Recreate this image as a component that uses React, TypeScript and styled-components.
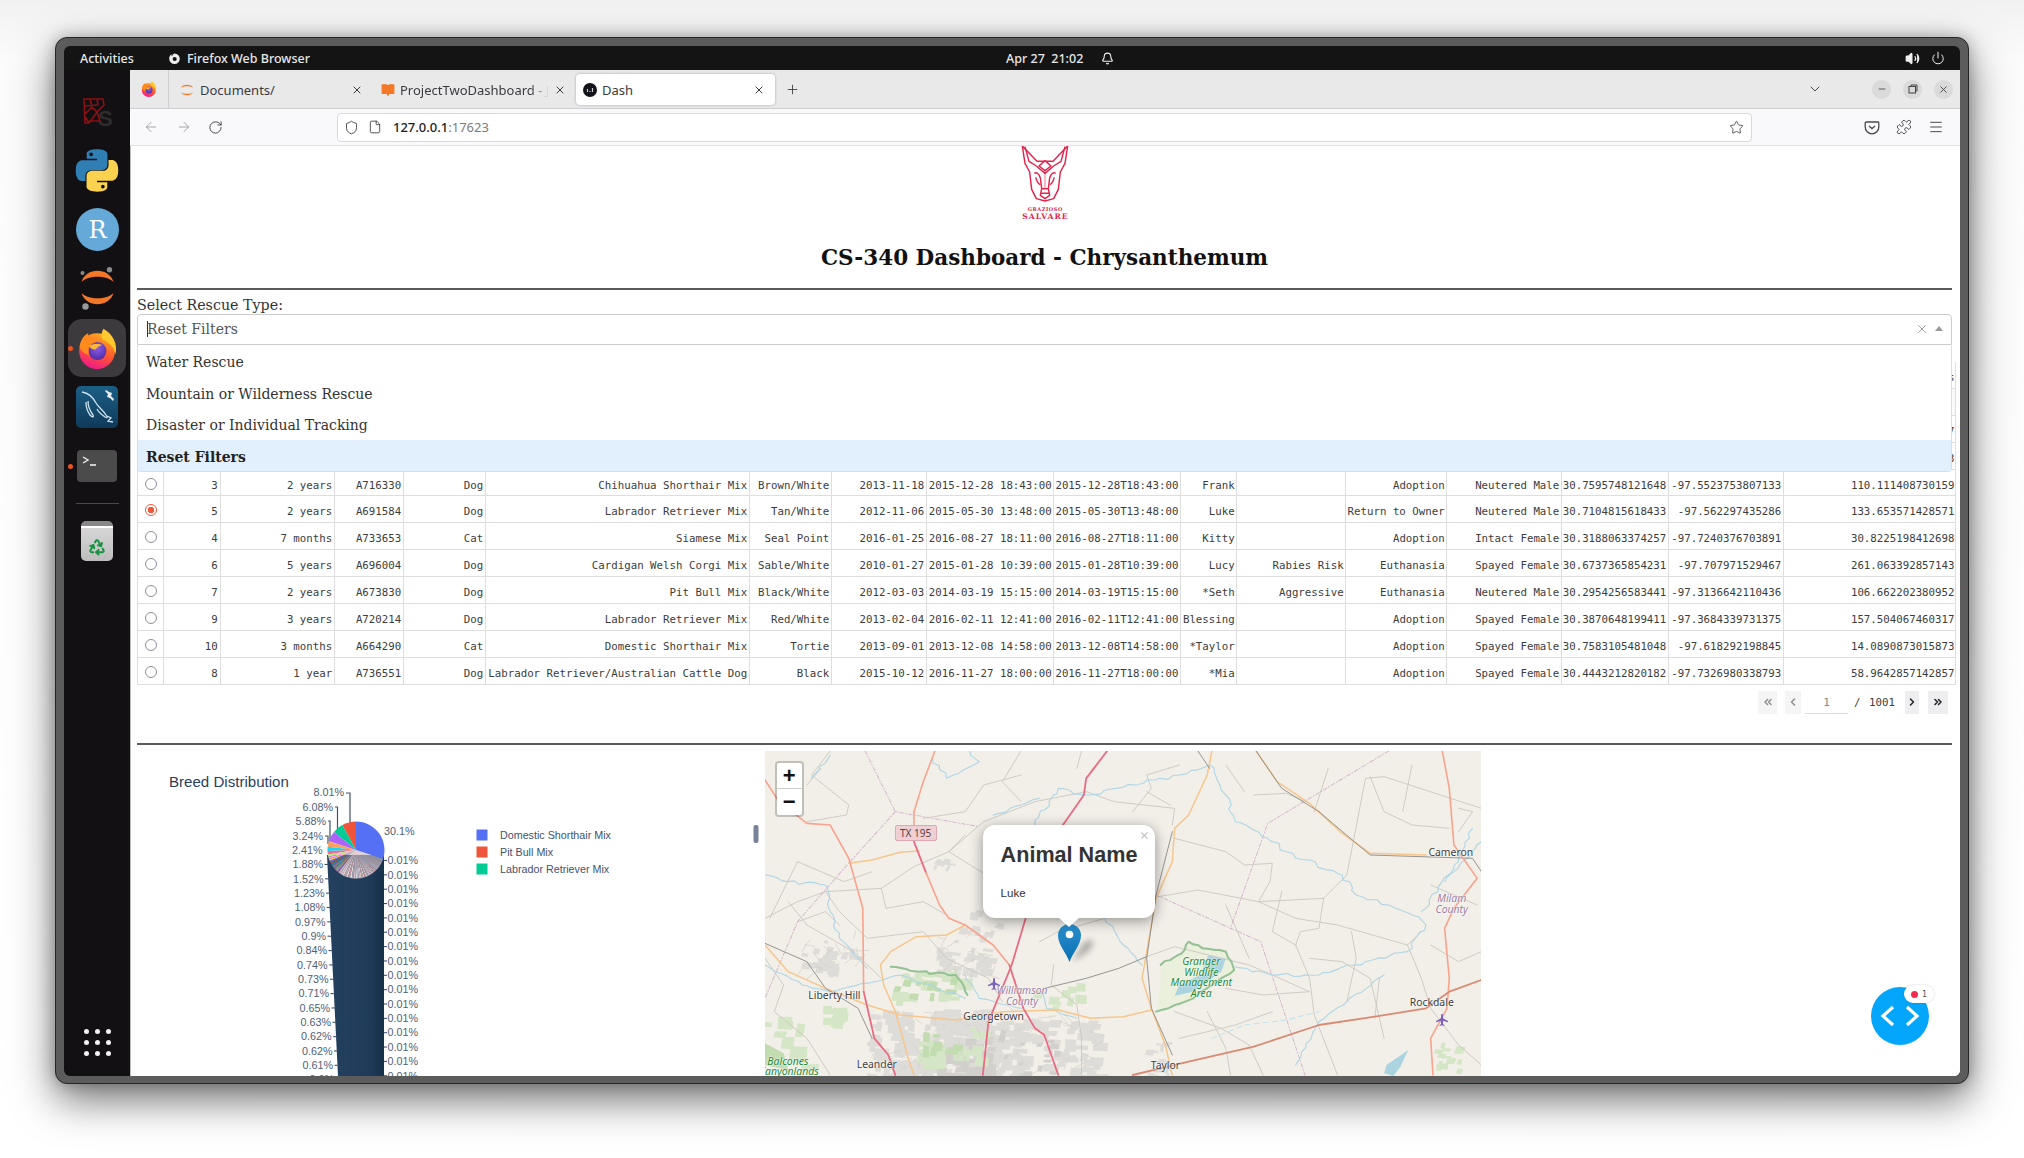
import React from "react";
import styled, { createGlobalStyle } from "styled-components";
import { X, Plus, ChevronDown, Minus, ArrowLeft, ArrowRight, RotateCw, Shield, File, Star, Menu, Puzzle, Volume2, Power, Bell, Recycle, BookOpen, ChevronLeft, ChevronRight, ChevronsLeft, ChevronsRight } from "lucide-react";

const Global = createGlobalStyle`
  html, body { margin: 0; padding: 0; width: 2024px; height: 1158px; overflow: hidden; background: #fff; }
  #root { width: 2024px; height: 1158px; }
  * { box-sizing: border-box; }
`;

const Desk = styled.div`
  padding: 37px 0 0 55px;
  width: 2024px;
  height: 1158px;
  background: linear-gradient(#f1f1f1, #fbfbfb 60px, #fff);
`;
const Frame = styled.div`
  width: 1914px;
  height: 1047px;
  padding: 8px 8px 7px 8px;
  background: #5c5c5c;
  border: 1px solid #262626;
  border-radius: 12px;
  box-shadow: 0 16px 42px rgba(0, 0, 0, 0.55), 0 0 16px rgba(0, 0, 0, 0.25);
  display: flex;
  flex-direction: column;
`;
const Screen = styled.div`
  flex: 1;
  min-height: 0;
  display: flex;
  flex-direction: column;
  border-radius: 6px;
  overflow: hidden;
`;
const TopBar = styled.div`
  height: 24px;
  flex: none;
  background: #141414;
  color: #e8e8e8;
  font: 500 12.5px "Noto Sans", sans-serif;
  display: flex;
  align-items: center;
  padding-left: 16px;
`;
const Activities = styled.span`
  width: 88px;
`;
const AppName = styled.span`
  display: flex;
  align-items: center;
  gap: 6px;
  width: 838px;
`;
const Clock = styled.span`
  width: 95px;
  font-size: 12.5px;
`;
const TrayBell = styled.span`
  display: flex;
  color: #f2f2f2;
  width: 804px;
`;
const Tray = styled.span`
  display: flex;
  gap: 11px;
  color: #f0f0f0;
`;
const Main = styled.div`
  flex: 1;
  min-height: 0;
  display: flex;
`;
const Dock = styled.nav`
  width: 66px;
  flex: none;
  background: #131014;
  display: flex;
  flex-direction: column;
  align-items: center;
`;
const DockItem = styled.div<{ $w: number; $h: number; $mt: number; $tile?: boolean; $run?: boolean }>`
  position: relative;
  width: ${p => p.$w}px;
  height: ${p => p.$h}px;
  margin-top: ${p => p.$mt}px;
  flex: none;
  display: flex;
  align-items: center;
  justify-content: center;
  background: ${p => (p.$tile ? "#3d3a3e" : "transparent")};
  border-radius: ${p => (p.$tile ? "14px" : "0")};
  &::before {
    content: "";
    display: ${p => (p.$run ? "block" : "none")};
    position: absolute;
    left: ${p => (p.$tile ? "0" : "-9px")};
    top: 50%;
    width: 5px;
    height: 5px;
    margin: -2.5px 0 0 0;
    border-radius: 50%;
    background: #e95420;
  }
`;
const DockSep = styled.div`
  width: 43px;
  height: 1px;
  margin-top: 21px;
  background: #4a4a4a;
  flex: none;
`;
const AppsGrid = styled.div`
  margin-top: auto;
  margin-bottom: 20px;
  width: 27px;
  height: 27px;
  display: grid;
  grid-template-columns: repeat(3, 5px);
  justify-content: space-between;
  align-content: space-between;
`;
const AppsDot = styled.i`
  width: 5px;
  height: 5px;
  border-radius: 50%;
  background: #f2f2f2;
`;
const Browser = styled.div`
  flex: 1;
  min-width: 0;
  display: flex;
  flex-direction: column;
  background: #fff;
`;
const TabBar = styled.div`
  height: 39px;
  flex: none;
  display: flex;
  align-items: stretch;
  background: #e9e9ea;
  border-bottom: 1px solid #cfcfd2;
  font: 13px "Noto Sans", sans-serif;
  color: #3b3b3f;
`;
const FxView = styled.div`
  width: 39px;
  display: flex;
  align-items: center;
  justify-content: center;
  border-right: 1px solid #cfcfd2;
`;
const Tab = styled.div<{ $w: number; $pad: number; $active?: boolean }>`
  width: ${p => p.$w}px;
  padding: 0 10px 0 ${p => p.$pad}px;
  margin: 4px 0 3px;
  display: flex;
  align-items: center;
  gap: 5px;
  border-radius: 4px;
  background: ${p => (p.$active ? "#fff" : "transparent")};
  box-shadow: ${p => (p.$active ? "0 0 3px rgba(0,0,0,.28)" : "none")};
`;
const TabText = styled.span<{ $fade?: boolean }>`
  flex: 1;
  min-width: 0;
  white-space: nowrap;
  overflow: hidden;
  ${p => (p.$fade ? "mask-image: linear-gradient(90deg,#000 88%,transparent);" : "")}
`;
const NewTab = styled.div`
  margin-left: 10px;
  display: flex;
  align-items: center;
`;
const TabEnd = styled.div`
  margin-left: auto;
  display: flex;
  align-items: center;
  gap: 12px;
  padding-right: 7px;
`;
const ListTabs = styled.span`
  display: flex;
  margin-right: 37px;
`;
const WinBtn = styled.span`
  width: 19px;
  height: 19px;
  border-radius: 50%;
  background: #dadada;
  display: flex;
  align-items: center;
  justify-content: center;
  color: #444;
`;
const ToolBar = styled.div`
  height: 37px;
  flex: none;
  background: #f9f9fb;
  border-bottom: 1px solid #e3e3e6;
  display: flex;
  align-items: center;
  color: #4a4a4f;
  padding-left: 13px;
`;
const NavBtn = styled.span<{ $dim?: boolean }>`
  width: 17px;
  margin-right: 15.5px;
  display: flex;
  color: ${p => (p.$dim ? "#a6a6aa" : "#4a4a4f")};
`;
const UrlBar = styled.div`
  margin-left: 96.5px;
  width: 1415px;
  height: 29px;
  background: #fff;
  border: 1px solid #d9d9dc;
  border-radius: 4px;
  display: flex;
  align-items: center;
  padding: 0 7px 0 6px;
  font: 13px "Noto Sans", sans-serif;
`;
const UrlIcon = styled.span<{ $gap: number }>`
  display: flex;
  margin-right: ${p => p.$gap}px;
`;
const UrlHost = styled.span`
  color: #1e1e22;
  font-weight: 500;
`;
const UrlPort = styled.span`
  color: #7b7b80;
  flex: 1;
`;
const ToolIcons = styled.div`
  margin-left: 112px;
  display: flex;
  gap: 16px;
`;
const Page = styled.main`
  flex: 1;
  min-height: 0;
  position: relative;
  overflow: hidden;
  background: #fff;
  border-left: 1px solid #bdbdbd;
  padding: 0 8px 0 6px;
  font-family: "DejaVu Serif", serif;
`;
const LogoRow = styled.div`
  height: 74px;
  display: flex;
  justify-content: center;
`;
const Title = styled.h1`
  margin: 25px 0 0;
  font: bold 21.5px/26px "DejaVu Serif", serif;
  color: #111;
  text-align: center;
`;
const Rule = styled.hr<{ $mt: number }>`
  margin: ${p => p.$mt}px 0 0;
  border: 0;
  height: 2px;
  background: #5a5a5a;
`;
const SelectLabel = styled.div`
  margin-top: 6px;
  font-size: 14.25px;
  line-height: 18px;
  color: #333;
`;
const SelectWrap = styled.div`
  position: relative;
  z-index: 3;
`;
const SelectBox = styled.div`
  height: 31px;
  border: 1px solid #ccc;
  border-radius: 4px 4px 0 0;
  background: #fff;
  display: flex;
  align-items: center;
  padding: 0 8px 2px 9px;
  font-size: 14px;
  color: #555;
`;
const Caret = styled.i`
  width: 1px;
  height: 16px;
  background: #333;
  margin-right: -1px;
`;
const SelectText = styled.span`
  flex: 1;
`;
const ClearX = styled.span`
  display: flex;
  color: #999;
  margin-right: 6px;
`;
const UpArrow = styled.i`
  width: 0;
  height: 0;
  border: 4.5px solid transparent;
  border-top: 0;
  border-bottom: 5px solid #999;
`;
const SelectMenu = styled.div`
  position: absolute;
  left: 0;
  right: 0;
  top: 31px;
  background: #fff;
  border: 1px solid #ddd;
  border-top: 0;
  border-radius: 0 0 4px 4px;
`;
const Option = styled.div<{ $active?: boolean }>`
  height: 31.6px;
  line-height: 34px;
  padding-left: 8px;
  font-size: 14px;
  font-weight: ${p => (p.$active ? 700 : 400)};
  color: ${p => (p.$active ? "#222" : "#333")};
  background: ${p => (p.$active ? "#e2f0fd" : "transparent")};
`;
const COLS = "26.5px 57px 114.4px 69px 82px 264px 82px 95px 127.5px 126.7px 56.3px 109px 101px 114.6px 107px 115px 172px";
const Table = styled.div`
  margin-top: 17px;
  width: 1819px;
  font: 10.75px "DejaVu Sans Mono", monospace;
  color: #3c3c3c;
`;
const Row = styled.div<{ $tint?: boolean }>`
  height: 26.9px;
  display: grid;
  grid-template-columns: ${COLS};
  background: ${p => (p.$tint ? "#fafafa" : "#fff")};
  border-bottom: 1px solid #dedede;
`;
const Cell = styled.div`
  text-align: right;
  white-space: nowrap;
  padding: 3px 1.7px 0 0;
  line-height: 25px;
  border-right: 1px solid #dedede;
  overflow: hidden;
  &:first-child { border-left: 1px solid #dedede; }
  &:last-child { padding-right: 0.5px; }
`;
const RadioCell = styled(Cell)`
  padding: 2px 0 0 1px;
  display: flex;
  align-items: center;
  justify-content: center;
`;
const Radio = styled.i<{ $on?: boolean }>`
  width: 12px;
  height: 12px;
  border-radius: 50%;
  border: 1.5px solid ${p => (p.$on ? "#f2583a" : "#8f8f9d")};
  background: ${p => (p.$on ? "radial-gradient(circle,#f2583a 0 3px,#fff 3.4px)" : "#fff")};
`;
const Pager = styled.div`
  margin-top: 6px;
  height: 23px;
  display: flex;
  justify-content: flex-end;
  align-items: stretch;
  padding-right: 4px;
  font: 10.75px/23px "DejaVu Sans Mono", monospace;
  color: #3c3c3c;
`;
const PageBtn = styled.span<{ $w: number; $ml: number; $dim?: boolean }>`
  width: ${p => p.$w}px;
  margin-left: ${p => p.$ml}px;
  display: flex;
  align-items: center;
  justify-content: center;
  background: ${p => (p.$dim ? "#f5f5f5" : "#eeeef1")};
  color: ${p => (p.$dim ? "#8f8f8f" : "#222")};
`;
const PageInput = styled.span`
  width: 43px;
  margin-left: 4px;
  text-align: center;
  color: #888;
  border-bottom: 1px solid #ddd;
  font-size: 11px;
`;
const PageSlash = styled.span`
  margin-left: 6px;
  width: 15px;
`;
const PageTotal = styled.span`
  width: 36px;
`;
const Lower = styled.div`
  margin-top: 6px;
  display: flex;
  align-items: flex-start;
`;
const ChartBox = styled.svg`
  width: 627.6px;
  height: 325px;
  flex: none;
  display: block;
  font-family: "Liberation Sans", sans-serif;
`;
const MapBox = styled.div`
  position: relative;
  width: 716.4px;
  height: 325px;
  flex: none;
  overflow: hidden;
  background: #f2efe9;
  font-family: "Noto Sans", sans-serif;
`;
const MapArt = styled.svg`
  position: absolute;
  inset: 0;
  width: 100%;
  height: 100%;
  path { vector-effect: non-scaling-stroke; stroke-linejoin: round; stroke-linecap: round; }
`;
const MapLabel = styled.span<{ $x: number; $y: number; $c?: string; $it?: boolean }>`
  position: absolute;
  left: ${p => (p.$x - 10) / 2.148}px;
  top: ${p => (p.$y - 18) / 3}px;
  transform: translate(-50%, -50%);
  white-space: nowrap;
  font-size: 10.4px;
  line-height: 11px;
  font-style: ${p => (p.$it ? "italic" : "normal")};
  color: ${p => p.$c || "#3d3d3d"};
  text-shadow: 0 0 2px #fff, 0 0 2px #fff;
`;
const Shield195 = styled.span`
  position: absolute;
  left: 130px;
  top: 74px;
  width: 42px;
  height: 16px;
  background: #eecfd3;
  border: 1px solid #dfa9b1;
  border-radius: 2px;
  text-align: center;
  font-size: 10px;
  line-height: 14px;
  color: #5a4044;
`;
const PlaneMark = styled.svg<{ $x: number; $y: number }>`
  position: absolute;
  left: ${p => (p.$x - 10) / 2.148 - 6}px;
  top: ${p => (p.$y - 18) / 3 - 6}px;
  width: 12px;
  height: 12px;
`;
const ZoomCtl = styled.div`
  position: absolute;
  left: 10px;
  top: 10px;
  width: 29px;
  border: 2px solid rgba(0, 0, 0, 0.2);
  border-radius: 4px;
  background: #fff;
  background-clip: padding-box;
  font: bold 22px/26px "Liberation Sans", sans-serif;
  color: #111;
  text-align: center;
`;
const ZoomBtn = styled.div`
  height: 26px;
  &:first-child { border-bottom: 1px solid #ccc; }
`;
const Pin = styled.svg`
  position: absolute;
  left: 293px;
  top: 173px;
  width: 50px;
  height: 42px;
  overflow: visible;
`;
const Popup = styled.div`
  position: absolute;
  left: 218px;
  top: 74px;
  width: 172px;
  height: 93px;
  background: #fff;
  border-radius: 12px;
  box-shadow: 0 3px 14px rgba(0, 0, 0, 0.4);
  padding: 17px 18px;
  font-family: "Liberation Sans", sans-serif;
  color: #333;
  &::after {
    content: "";
    position: absolute;
    left: 75px;
    bottom: -9px;
    width: 0;
    height: 0;
    border-left: 11px solid transparent;
    border-right: 11px solid transparent;
    border-top: 10px solid #fff;
  }
`;
const PopupClose = styled.span`
  position: absolute;
  top: 5px;
  right: 5px;
  display: flex;
  color: #c3c3c3;
`;
const PopupTitle = styled.h1`
  margin: 0;
  font: bold 21.6px/26px "Liberation Sans", sans-serif;
  white-space: nowrap;
`;
const PopupBody = styled.p`
  margin: 18.5px 0 0;
  font-size: 11.5px;
  line-height: 14px;
`;
const Fab = styled.div`
  position: absolute;
  right: 31px;
  bottom: 31px;
  width: 58px;
  height: 58px;
  border-radius: 50%;
  background: #03a6fb;
  display: flex;
  align-items: center;
  justify-content: center;
`;
const FabBadge = styled.div`
  position: absolute;
  left: 33px;
  top: -2px;
  width: 30px;
  height: 18px;
  border-radius: 9px;
  background: #fff;
  box-shadow: 0 0 2px rgba(0, 0, 0, 0.2);
  display: flex;
  align-items: center;
  justify-content: center;
  gap: 4px;
  font: 8px "DejaVu Sans", sans-serif;
  color: #555;
`;
const RedDot = styled.i`
  width: 7px;
  height: 7px;
  border-radius: 50%;
  background: #ef2d4f;
`;

const FirefoxIcon = ({ s, id }: { s: number; id: string }) => (
  <svg width={s} height={s} viewBox="0 0 48 48">
    <defs>
      <linearGradient id={id + "a"} x1="0.7" y1="0" x2="0.3" y2="1">
        <stop offset="0" stopColor="#ffb21e" />
        <stop offset="0.5" stopColor="#ff5a2c" />
        <stop offset="1" stopColor="#f0148e" />
      </linearGradient>
      <radialGradient id={id + "b"} cx="0.5" cy="0.35" r="0.7">
        <stop offset="0" stopColor="#8c5ce8" />
        <stop offset="1" stopColor="#4a2aa0" />
      </radialGradient>
    </defs>
    <circle cx="23.5" cy="27" r="21" fill={`url(#${id}a)`} />
    <path d="M31 1c-3 6-3 10 0 13 7 3 13 9 14 17 3-12-3-24-14-30z" fill="#ffc82e" />
    <circle cx="24" cy="27" r="10.5" fill={`url(#${id}b)`} />
    <path d="M3 22C4 13 9 8 13 6c0 4 2 6 5 7 4-1 9 0 12 3-5-1-11 0-14 4-3 3-3 8-2 12-5-2-10-5-11-10z" fill="#ff8a1e" />
    <path d="M14 21c5-3 12-3 16-1-4 1-7 3-8 5-3 1-6-1-8-4z" fill="#ffb92e" />
  </svg>
);
const JupyterArcs = ({ s }: { s: number }) => (
  <svg width={s} height={s} viewBox="0 0 44 44">
    <path d="M5 16C10 5 34 5 39 16 33 10 11 10 5 16zM5 28c6 6 28 6 34 0C34 39 10 39 5 28z" fill="#f37726" />
  </svg>
);
const JupyterDock = () => (
  <svg width="43" height="43" viewBox="0 0 43 43">
    <path d="M5.5 15C10 0 33 0 37.5 15 31 8 12 8 5.5 15zM5.5 26C12 33 31 33 37.5 26 33 41 10 41 5.5 26z" fill="#f37726" />
    <circle cx="33.5" cy="2.8" r="2.7" fill="#8a8a8a" />
    <circle cx="6.5" cy="6" r="2" fill="#8a8a8a" />
    <circle cx="9.5" cy="39.5" r="3.2" fill="#9a9a9a" />
  </svg>
);
const KsSvg = styled.svg`
  overflow: visible;
`;
const KsIcon = () => (
  <KsSvg width="31" height="30" viewBox="0 0 31 30">
    <path d="M2 2h19l1 6-7 7-8 11H3zM2 9l14-1M8 2l2 8-8 8M15 2l1 6M10 10l5 5 3 9H7M2 18l5 8" fill="none" stroke="#8c0f12" strokeWidth="1.6" />
    <text x="16" y="29" fontFamily="Liberation Sans, sans-serif" fontSize="22" fontWeight="700" fill="#2d2d2d">S</text>
  </KsSvg>
);
const PythonIcon = () => (
  <svg width="44" height="43" viewBox="0 0 24 24" preserveAspectRatio="none">
    <path fillRule="evenodd" fill="#2f7fb5" d="M11.9.2C6 .2 6.4 2.8 6.4 2.8v2.7h5.6v.8H4.2S.4 5.9.4 12c0 6.1 3.3 5.9 3.3 5.9h2v-2.8s-.1-3.3 3.3-3.3h5.6s3.1 0 3.1-3V3.3S18.3.2 11.9.2zM8.8 2a1 1 0 1 1 0 2 1 1 0 0 1 0-2z" />
    <path fillRule="evenodd" fill="#fbd24f" transform="rotate(180 12 12)" d="M11.9.2C6 .2 6.4 2.8 6.4 2.8v2.7h5.6v.8H4.2S.4 5.9.4 12c0 6.1 3.3 5.9 3.3 5.9h2v-2.8s-.1-3.3 3.3-3.3h5.6s3.1 0 3.1-3V3.3S18.3.2 11.9.2zM8.8 2a1 1 0 1 1 0 2 1 1 0 0 1 0-2z" />
  </svg>
);
const RIcon = () => (
  <svg width="43" height="43" viewBox="0 0 43 43">
    <circle cx="21.5" cy="21.5" r="21.5" fill="#64a9d8" />
    <text x="21.5" y="30" textAnchor="middle" fontFamily="DejaVu Serif, serif" fontSize="24" fill="#fff">R</text>
  </svg>
);
const MysqlIcon = () => (
  <svg width="42" height="42" viewBox="0 0 42 42">
    <defs>
      <linearGradient id="myg" x1="0" y1="0" x2="0" y2="1">
        <stop offset="0" stopColor="#1b5f85" />
        <stop offset="1" stopColor="#0f3a5a" />
      </linearGradient>
    </defs>
    <rect width="42" height="42" rx="5" fill="url(#myg)" />
    <path d="M6 6c6 1 11 5 14 11 3 5 7 7 10 12 2 3 1 3-1 2-3-2-6-4-8-8M12 15c0 6 2 10 5 14 1 3-1 2-3 0-3-4-4-9-4-13M31 30l4 2-3 3 5 1" fill="none" stroke="#cfe3ee" strokeWidth="1.3" />
    <path d="M29 5l3 3-1 3 3 1 3 3 1-2-3-3 1-3-3-1-3-2z" fill="#e8f0f5" />
  </svg>
);
const TerminalIcon = () => (
  <svg width="40" height="32" viewBox="0 0 40 32">
    <rect width="40" height="32" rx="4" fill="#4b4b4b" />
    <path d="M6 7l5 3-5 3" fill="none" stroke="#eee" strokeWidth="1.4" />
    <path d="M13 15h6" stroke="#eee" strokeWidth="1.6" />
  </svg>
);
const TrashBox = styled.div`
  width: 32px;
  height: 40px;
  border-radius: 5px;
  background: linear-gradient(#d8d8d8, #bdbdbd);
  border-top: 5px solid #888;
  box-shadow: inset 0 2px 0 #fff;
  display: flex;
  align-items: center;
  justify-content: center;
  padding-top: 6px;
  color: #14933f;
`;
const DashIcon = () => (
  <svg width="14" height="14" viewBox="0 0 14 14">
    <circle cx="7" cy="7" r="7" fill="#12121a" />
    <path d="M4.5 6v3M7 8v1M9.5 5v4" stroke="#cfcfcf" strokeWidth="1.2" />
  </svg>
);
const PocketIcon = () => (
  <svg width="16" height="16" viewBox="0 0 16 16" fill="none" stroke="#4a4a4f" strokeWidth="1.3">
    <path d="M2 3h12a.8.8 0 0 1 .8.8V8A6.8 6.8 0 0 1 1.2 8V3.8A.8.8 0 0 1 2 3z" />
    <path d="M5 7l3 2.6L11 7" />
  </svg>
);
const LogoArt = () => (
  <svg width="80" height="74" viewBox="0 18 240 222" fill="none" stroke="#e1264e" strokeWidth="4.4" strokeLinejoin="round">
    <path d="M52 18l8 52 14 26 6 52 14 28 26 7 26-7 14-28 6-52 14-26 8-52-44 46h-48z" />
    <path d="M60 20l12 44 22 14M180 20l-12 44-22 14" />
    <path d="M120 62l18 16-18 14-18-14zM94 78l26 22 26-22" />
    <path d="M88 100c6-4 14 0 18 14l4 32M152 100c-6-4-14 0-18 14l-4 32" />
    <path d="M92 112c4 14 8 20 14 22M148 112c-4 14-8 20-14 22" />
    <path d="M110 146l-4 20 14 10 14-10-4-20zM108 160h24" />
    <path d="M120 100v46" strokeWidth="2" />
    <text x="120" y="212" textAnchor="middle" fontFamily="DejaVu Serif, serif" fontWeight="700" fontSize="15" fill="#e1264e" stroke="none" textLength="104">GRAZIOSO</text>
    <text x="120" y="238" textAnchor="middle" fontFamily="DejaVu Serif, serif" fontWeight="700" fontSize="23" fill="#e1264e" stroke="none" textLength="136">SALVARE</text>
  </svg>
);

const rows: string[][] = [
  ["3", "2 years", "A716330", "Dog", "Chihuahua Shorthair Mix", "Brown/White", "2013-11-18", "2015-12-28 18:43:00", "2015-12-28T18:43:00", "Frank", "", "Adoption", "Neutered Male", "30.7595748121648", "-97.5523753807133", "110.111408730159"],
  ["5", "2 years", "A691584", "Dog", "Labrador Retriever Mix", "Tan/White", "2012-11-06", "2015-05-30 13:48:00", "2015-05-30T13:48:00", "Luke", "", "Return to Owner", "Neutered Male", "30.7104815618433", "-97.562297435286", "133.653571428571"],
  ["4", "7 months", "A733653", "Cat", "Siamese Mix", "Seal Point", "2016-01-25", "2016-08-27 18:11:00", "2016-08-27T18:11:00", "Kitty", "", "Adoption", "Intact Female", "30.3188063374257", "-97.7240376703891", "30.8225198412698"],
  ["6", "5 years", "A696004", "Dog", "Cardigan Welsh Corgi Mix", "Sable/White", "2010-01-27", "2015-01-28 10:39:00", "2015-01-28T10:39:00", "Lucy", "Rabies Risk", "Euthanasia", "Spayed Female", "30.6737365854231", "-97.707971529467", "261.063392857143"],
  ["7", "2 years", "A673830", "Dog", "Pit Bull Mix", "Black/White", "2012-03-03", "2014-03-19 15:15:00", "2014-03-19T15:15:00", "*Seth", "Aggressive", "Euthanasia", "Neutered Male", "30.2954256583441", "-97.3136642110436", "106.662202380952"],
  ["9", "3 years", "A720214", "Dog", "Labrador Retriever Mix", "Red/White", "2013-02-04", "2016-02-11 12:41:00", "2016-02-11T12:41:00", "Blessing", "", "Adoption", "Spayed Female", "30.3870648199411", "-97.3684339731375", "157.504067460317"],
  ["10", "3 months", "A664290", "Cat", "Domestic Shorthair Mix", "Tortie", "2013-09-01", "2013-12-08 14:58:00", "2013-12-08T14:58:00", "*Taylor", "", "Adoption", "Spayed Female", "30.7583105481048", "-97.618292198845", "14.0890873015873"],
  ["8", "1 year", "A736551", "Dog", "Labrador Retriever/Australian Cattle Dog", "Black", "2015-10-12", "2016-11-27 18:00:00", "2016-11-27T18:00:00", "*Mia", "", "Adoption", "Spayed Female", "30.4443212820182", "-97.7326980338793", "58.9642857142857"],
];
const BLANK = Array.from({ length: 16 }, (_, i) => i);
const TailRow = ({ text, tint }: { text: string; tint?: boolean }) => (
  <Row $tint={tint}>
    {BLANK.map(i => <Cell key={i} />)}
    <Cell>{text}</Cell>
  </Row>
);

// ---- Chart ----
const PAL = ["#5570f5", "#ef553b", "#00cc96", "#ab63fa", "#ffa15a", "#19d3f3", "#ff6692", "#b6e880", "#ff97ff", "#fecb52"];
const THIN = ["#d9a9b4", "#c9c4d6", "#e6c9c4", "#b9a7b0", "#dcd4d8", "#c98f9b", "#e3dcd2", "#a99fb5", "#d8bfc8", "#cfd6da"];
const leftLabels = [["8.01%", 344], ["6.08%", 333], ["5.88%", 326], ["3.24%", 323], ["2.41%", 322.5], ["1.88%", 323], ["1.52%", 323.6], ["1.23%", 324.5], ["1.08%", 325], ["0.97%", 325.7], ["0.9%", 326], ["0.84%", 327], ["0.74%", 327.7], ["0.73%", 328.5], ["0.71%", 329], ["0.65%", 330], ["0.63%", 331], ["0.62%", 331.7], ["0.62%", 332.5], ["0.61%", 333], ["0.6%", 334]] as [string, number][];
const bigShares = [8.01, 6.08, 5.88, 3.24, 2.41, 1.88, 1.52, 1.23, 1.08, 0.97, 0.9, 0.84, 0.74, 0.73, 0.71, 0.65, 0.63, 0.62, 0.62, 0.61];
const thinCount = 60;
const thinRaw = Array.from({ length: thinCount }, (_, i) => 0.05 + 0.6 * Math.pow(1 - i / thinCount, 2));
const thinSum = thinRaw.reduce((a, b) => a + b, 0);
const thin = thinRaw.map(v => (v * 30.55) / thinSum);
const CX = 356, CY = 850, R = 28.5;
const pt = (deg: number): string => {
  const a = (deg * Math.PI) / 180;
  return `${(CX + R * Math.sin(a)).toFixed(2)} ${(CY - R * Math.cos(a)).toFixed(2)}`;
};
const wedge = (from: number, to: number, sweep: number) =>
  `M${CX} ${CY}L${pt(from)}A${R} ${R} 0 ${Math.abs(to - from) > 180 ? 1 : 0} ${sweep} ${pt(to)}Z`;
const wedges: { d: string; c: string }[] = (() => {
  const out = [{ d: wedge(0, 108.4, 1), c: PAL[0] }];
  let ang = 0;
  bigShares.forEach((v, i) => {
    const next = ang - v * 3.6;
    out.push({ d: wedge(ang, next, 0), c: i < 10 ? PAL[(i + 1) % 10] : PAL[(i + 1) % 10] + "aa" });
    ang = next;
  });
  thin.forEach((v, i) => {
    const next = ang - v * 3.6;
    out.push({ d: wedge(ang, next, 0), c: THIN[i % 10] });
    ang = next;
  });
  return out;
})();

const Chart = () => (
  <ChartBox viewBox="137 751 627.6 325">
    <defs>
      <linearGradient id="mass" x1="0" y1="0" x2="1" y2="0">
        <stop offset="0" stopColor="#23405f" />
        <stop offset="0.75" stopColor="#1f3b58" />
        <stop offset="1" stopColor="#17304a" />
      </linearGradient>
    </defs>
    <text x="169" y="787" fontSize="15.1" fill="#2a3f5f">Breed Distribution</text>
    <path d="M327 855L384 855L384 1076L338 1076Z" fill="url(#mass)" />
    <path d="M346 793h4v32M335 807h2.5v25M328 821h2v20M325 836h3v8" fill="none" stroke="#41536b" strokeWidth="1.2" />
    {leftLabels.map(([t, x], i) => {
      const y = 792.7 + i * 14.35;
      return (
        <g key={i}>
          {i > 4 && <path d={`M${x + 1.5} ${y}H${327 + 0.05 * (y - 855) + 1}`} stroke="#41536b" strokeWidth="1.1" />}
          <text x={x} y={y + 3.8} textAnchor="end" fontSize="10.8" fill="#506078">{t}</text>
        </g>
      );
    })}
    <text x="384" y="835.5" fontSize="10.8" fill="#506078">30.1%</text>
    {Array.from({ length: 16 }, (_, i) => {
      const y = 860.5 + i * 14.35;
      return (
        <g key={i}>
          <path d={`M384 ${y}h3`} stroke="#41536b" strokeWidth="1.1" />
          <text x="387.5" y={y + 3.8} fontSize="10.8" fill="#506078">0.01%</text>
        </g>
      );
    })}
    {wedges.map((w, i) => (
      <path key={i} d={w.d} fill={w.c} />
    ))}
    <rect x="476.5" y="829.5" width="11" height="11" fill="#5570f5" />
    <rect x="476.5" y="846.5" width="11" height="11" fill="#ef553b" />
    <rect x="476.5" y="863.5" width="11" height="11" fill="#00cc96" />
    <text x="500" y="839" fontSize="10.75" fill="#3f5270">Domestic Shorthair Mix</text>
    <text x="500" y="856" fontSize="10.75" fill="#3f5270">Pit Bull Mix</text>
    <text x="500" y="873" fontSize="10.75" fill="#3f5270">Labrador Retriever Mix</text>
    <rect x="753.5" y="825" width="5" height="18" rx="2" fill="#78839a" />
  </ChartBox>
);

// ---- Map ----
const lcg = (seed: number) => {
  let s = seed;
  return () => {
    s = (s * 16807) % 2147483647;
    return s / 2147483647;
  };
};
// Speckled town and woodland blocks, the way a tile map shows them.
const speckle = (seed: number, n: number, x0: number, x1: number, y0: number, y1: number, size: number) => {
  const r = lcg(seed);
  let d = "";
  for (let i = 0; i < n; i++) {
    const x = x0 + r() * (x1 - x0);
    const y = y0 + r() * (y1 - y0);
    const w = size * (0.4 + r());
    const h = size * 1.1 * (0.4 + r());
    d += `M${x.toFixed(0)} ${y.toFixed(0)}l${w.toFixed(0)} ${(r() * 4).toFixed(0)}l${(-r() * 6).toFixed(0)} ${h.toFixed(0)}l${(-w).toFixed(0)} ${(-r() * 4).toFixed(0)}z`;
  }
  return d;
};
// Rivers meander: subdivide a stroke and jitter the new points.
const meander = (seed: number, pts: number[][], amp: number) => {
  const r = lcg(seed);
  let d = `M${pts[0][0]} ${pts[0][1]}`;
  for (let i = 1; i < pts.length; i++) {
    const [ax, ay] = pts[i - 1];
    const [bx, by] = pts[i];
    const steps = Math.max(2, Math.round(Math.hypot(bx - ax, by - ay) / 14));
    for (let k = 1; k <= steps; k++) {
      const t = k / steps;
      const jx = k === steps ? 0 : (r() - 0.5) * amp;
      const jy = k === steps ? 0 : (r() - 0.5) * amp;
      d += `L${(ax + (bx - ax) * t + jx).toFixed(1)} ${(ay + (by - ay) * t + jy).toFixed(1)}`;
    }
  }
  return d;
};
const streets = (seed: number, n: number, x0: number, x1: number, y0: number, y1: number) => {
  const r = lcg(seed);
  let d = "";
  for (let i = 0; i < n; i++) {
    const x = x0 + r() * (x1 - x0);
    const y = y0 + r() * (y1 - y0);
    d += `M${x.toFixed(0)} ${y.toFixed(0)}l${((r() - 0.5) * 60).toFixed(0)} ${((r() - 0.5) * 70).toFixed(0)}`;
  }
  return d;
};
const mapAreas = [
  { f: "#dedcd8", d: speckle(11, 26, 90, 200, 585, 670, 20) + speckle(12, 8, 375, 405, 340, 375, 12) + speckle(13, 14, 430, 510, 485, 570, 14) + speckle(14, 30, 380, 500, 580, 690, 18) + speckle(15, 90, 230, 480, 790, 990, 28) + speckle(16, 110, 420, 720, 820, 990, 24) + speckle(17, 16, 830, 880, 890, 990, 14) },
  { f: "#d2d0cd", d: speckle(18, 34, 380, 490, 880, 990, 22) + speckle(19, 24, 480, 640, 850, 990, 14) },
  { f: "#d4e6c6", d: speckle(21, 22, 285, 440, 675, 760, 26) + speckle(22, 18, 340, 470, 845, 940, 30) + speckle(23, 8, 135, 170, 780, 840, 24) + speckle(24, 10, 10, 90, 800, 990, 30) + speckle(25, 12, 1450, 1500, 890, 970, 14) + speckle(26, 10, 590, 700, 690, 790, 18) },
  { f: "#c1dcae", d: speckle(27, 10, 290, 430, 690, 750, 18) + speckle(28, 8, 350, 450, 860, 920, 24) + "M10 895L50 925L60 975L10 960Z" },
  { f: "#eaf0dc", d: "M860 660L905 625L920 590L950 610L1000 620L1018 675L990 700L930 760L850 800L860 720Z" },
  { f: "#abd3e0", d: "M962 632L1000 640L990 680L930 740L890 752L900 720L945 690ZM1345 960L1392 915L1375 965L1360 993L1340 985Z" },
];
const water = [
  meander(31, [[10, 390], [60, 410], [140, 420], [150, 500], [170, 580], [230, 670]], 9),
  meander(32, [[590, 240], [640, 130], [700, 150], [900, 90], [965, 60], [1000, 150], [1020, 230], [1090, 280], [1130, 320], [1250, 390], [1280, 450], [1350, 480], [1400, 510], [1430, 540], [1390, 620], [1300, 650], [1200, 690], [1100, 690], [1020, 665]], 11),
  meander(33, [[740, 520], [780, 600], [820, 660]], 8),
  meander(34, [[1530, 250], [1500, 350], [1420, 500]], 9),
  meander(35, [[1340, 690], [1260, 770], [1200, 830], [1150, 960]], 7),
  meander(36, [[450, 18], [470, 50], [400, 100], [370, 40]], 10),
  meander(37, [[500, 210], [560, 180], [600, 160]], 7),
  meander(38, [[110, 100], [150, 30]], 7),
  meander(39, [[10, 660], [90, 720], [150, 740], [300, 690], [440, 760]], 8),
  meander(40, [[610, 740], [615, 790], [680, 820]], 6),
  meander(41, [[440, 690], [470, 760], [560, 790]], 7),
  meander(42, [[1549, 290], [1490, 380], [1470, 410]], 7),
];
const mapLines = [
  { s: "#d3d0c9", w: 0.7, d: [streets(51, 60, 240, 720, 800, 990), streets(52, 18, 90, 220, 570, 690), streets(53, 18, 390, 510, 560, 700)] },
  { s: "#cbc7bf", w: 0.9, d: ["M150 18L110 90L190 180L185 210L100 230", "M10 520L80 470L140 440L260 430L330 365L405 320L480 230L590 170L700 140L760 170L890 190L885 240", "M405 320L520 420", "M260 430L270 490L350 470L400 510", "M140 440L170 500L230 580L350 560L400 640L490 700L520 770", "M890 280L1000 320L1040 360L1100 355L1095 410L1070 470L1210 460L1260 390L1300 100L1340 95L1549 190", "M1210 460L1200 550L1160 560L1150 600L1180 700L1190 810L1240 990", "M855 455L940 435L1070 470L1150 520L1240 540L1390 600L1420 560", "M1390 600L1420 700L1440 790L1500 900L1549 960", "M600 590L640 560L740 520", "M630 660L625 720L680 780L690 880L690 990", "M820 640L890 605L1050 660L1100 690L1180 740L1080 750L1000 730", "M890 800L990 850L1050 900L1080 990", "M1310 95L1340 200L1400 240L1480 250", "M1060 150L1130 145L1180 175", "M1190 200L1220 70", "M830 140L880 180", "M440 270L405 320", "M80 350L20 520", "M10 640L50 720L30 800L100 880L150 990", "M260 700L200 620L100 540L60 470", "M800 200L840 130L830 90L900 60", "M1500 190L1530 200L1500 260", "M1180 640L1250 650L1310 700L1340 880", "M1100 800L1020 840L900 880", "M1440 420L1540 480", "M560 18L520 110L560 170", "M690 18L680 70", "M130 70L100 120", "M80 530L140 500L170 540", "M240 380L180 410L80 350", "M1000 480L1050 640", "M1270 560L1280 640L1260 770", "M1320 820L1330 700", "M960 800L1000 910L1010 990", "M1120 440L1100 560L1150 600", "M1000 60L1040 140", "M1400 60L1380 200", "M1440 600L1500 650L1549 620", "M350 220L440 200L480 120L560 90"] },
  { s: "#d2b9cc", w: 1, dash: "4 2 1 2", d: ["M225 18L290 200L470 245", "M290 200L180 370L80 530L10 760", "M1350 18L1090 235L1010 550", "M850 450L1075 590L1170 990"] },
  { s: "#aed6e6", w: 1.1, d: water },
  { s: "#c5e3ee", w: 1.1, dash: "5 4", d: ["M970 880L1040 840L1130 825L1200 800"] },
  { s: "#93c193", w: 2, d: [meander(61, [[860, 660], [905, 625], [920, 590], [950, 610], [1000, 620], [1018, 675], [990, 700], [930, 760], [850, 800]], 6), meander(62, [[280, 665], [340, 680], [420, 690], [445, 750]], 8)] },
  { s: "#f7c68c", w: 1.5, d: ["M190 355L240 345L300 322L340 318", "M440 540L400 570L335 575L280 620L258 660L265 720L290 800L320 950L330 990", "M10 600L60 680L140 730L230 780L300 810L420 825L520 800L640 795L710 820L780 815L840 795", "M970 18L960 90L920 210L890 250L885 350L850 460L830 620L820 700L840 790L870 900L885 990", "M1310 325L1430 330", "M1065 18L1110 110L1180 175L1250 265L1310 325"] },
  { s: "#8c8a86", w: 0.9, d: ["M610 730L700 700L770 670L830 635", "M10 595L100 650L140 730L210 790L240 880", "M940 18L965 70", "M1065 18L1120 130L1200 200L1310 330L1530 340L1549 380", "M885 260L850 450L830 640L840 790L885 930"] },
  { s: "#f9a28c", w: 1.6, d: ["M375 18L350 110L330 200L330 290", "M10 105L40 170L100 235L150 240L190 340L220 490L222 740", "M1465 18L1480 130L1490 300L1540 400L1490 490L1470 550L1480 700L1475 790L1440 880L1445 990", "M355 380L385 480L405 520L440 540L500 600L535 660"] },
  { s: "#ea6a82", w: 1.8, d: ["M745 18L700 100L695 150L650 240", "M570 520L540 660L490 830L478 990", "M330 290L355 380", "M535 660L565 790L590 850L610 870L640 990", "M222 740L245 880L275 930L290 990"] },
  { s: "#d98a72", w: 1.8, d: ["M800 990L920 950L1060 905L1200 840L1320 815L1430 790L1480 740L1549 705"] },
];
const MapView = () => (
  <MapBox>
    <MapArt viewBox="10 18 1539 975" preserveAspectRatio="none">
      {mapAreas.map((a, i) => <path key={i} d={a.d} fill={a.f} />)}
      {mapLines.map((l, i) => l.d.map((d, j) => (
        <path key={`${i}-${j}`} d={d} fill="none" stroke={l.s} strokeWidth={l.w} strokeDasharray={(l as any).dash} />
      )))}
    </MapArt>
    <Shield195>TX 195</Shield195>
    <MapLabel $x={160} $y={750}>Liberty Hill</MapLabel>
    <MapLabel $x={502} $y={815}>Georgetown</MapLabel>
    <MapLabel $x={251} $y={958}>Leander</MapLabel>
    <MapLabel $x={871} $y={960}>Taylor</MapLabel>
    <MapLabel $x={1484} $y={321}>Cameron</MapLabel>
    <MapLabel $x={1443} $y={772}>Rockdale</MapLabel>
    <MapLabel $x={563} $y={737} $c="#9c7fa4" $it>Williamson</MapLabel>
    <MapLabel $x={563} $y={769} $c="#9c7fa4" $it>County</MapLabel>
    <MapLabel $x={1486} $y={461} $c="#9c7fa4" $it>Milam</MapLabel>
    <MapLabel $x={1486} $y={493} $c="#9c7fa4" $it>County</MapLabel>
    <MapLabel $x={948} $y={650} $c="#1f8a3a" $it>Granger</MapLabel>
    <MapLabel $x={948} $y={682} $c="#1f8a3a" $it>Wildlife</MapLabel>
    <MapLabel $x={948} $y={713} $c="#1f8a3a" $it>Management</MapLabel>
    <MapLabel $x={948} $y={745} $c="#1f8a3a" $it>Area</MapLabel>
    <MapLabel $x={60} $y={948} $c="#1f8a3a" $it>Balcones</MapLabel>
    <MapLabel $x={62} $y={980} $c="#1f8a3a" $it>Canyonlands</MapLabel>
    <PlaneMark $x={502} $y={717} viewBox="0 0 12 12"><path d="M5.3 0h1.4l.5 4.4L12 7v1.3L7.2 6.8 6.9 10l1.5 1.2V12L6 11.3 3.6 12v-.8L5.1 10l-.3-3.2L0 8.3V7l4.8-2.6z" fill="#7a5fc0" /></PlaneMark>
    <PlaneMark $x={1465} $y={825} viewBox="0 0 12 12"><path d="M5.3 0h1.4l.5 4.4L12 7v1.3L7.2 6.8 6.9 10l1.5 1.2V12L6 11.3 3.6 12v-.8L5.1 10l-.3-3.2L0 8.3V7l4.8-2.6z" fill="#7a5fc0" /></PlaneMark>
    <ZoomCtl>
      <ZoomBtn>+</ZoomBtn>
      <ZoomBtn>−</ZoomBtn>
    </ZoomCtl>
    <Pin viewBox="0 0 50 42">
      <defs>
        <linearGradient id="pin" x1="0" y1="0" x2="0" y2="1">
          <stop offset="0" stopColor="#2a90d0" />
          <stop offset="1" stopColor="#0a6fb0" />
        </linearGradient>
      </defs>
      <path d="M14 37L27 18c3-3 9-2 8 2-2 6-11 13-21 17z" fill="#000" opacity="0.3" style={{ filter: "blur(3px)" }} />
      <path d="M11.5 38C9 30 0 21 0 11.5a11.5 11.5 0 0 1 23 0C23 21 14 30 11.5 38z" fill="url(#pin)" />
      <circle cx="11.5" cy="10.5" r="3.8" fill="#fff" />
    </Pin>
    <Popup>
      <PopupClose><X size={11} strokeWidth={2.4} /></PopupClose>
      <PopupTitle>Animal Name</PopupTitle>
      <PopupBody>Luke</PopupBody>
    </Popup>
  </MapBox>
);

export default function App() {
  return (
    <>
      <Global />
      <Desk>
        <Frame>
          <Screen>
            <TopBar>
              <Activities>Activities</Activities>
              <AppName>
                <svg width="13" height="13" viewBox="0 0 14 14"><path d="M7 1.5a5.7 5.7 0 1 1-5.7 5.7c0-2 1-3.7 2.4-4.7-.2 1 .2 1.7.8 2A3 3 0 0 1 7 1.5z" fill="#eee" /><circle cx="7.2" cy="7.6" r="2.2" fill="#141414" /></svg>
                Firefox Web Browser
              </AppName>
              <Clock>Apr 27&nbsp; 21:02</Clock>
              <TrayBell><Bell size={13} strokeWidth={2} /></TrayBell>
              <Tray><Volume2 size={15} strokeWidth={2} fill="#f0f0f0" /><Power size={14} strokeWidth={1.7} /></Tray>
            </TopBar>
            <Main>
              <Dock>
                <DockItem $w={31} $h={30} $mt={27}><KsIcon /></DockItem>
                <DockItem $w={44} $h={43} $mt={22}><PythonIcon /></DockItem>
                <DockItem $w={43} $h={43} $mt={16}><RIcon /></DockItem>
                <DockItem $w={43} $h={43} $mt={16}><JupyterDock /></DockItem>
                <DockItem $w={58} $h={58} $mt={9} $tile $run><FirefoxIcon s={41} id="fxd" /></DockItem>
                <DockItem $w={42} $h={42} $mt={9}><MysqlIcon /></DockItem>
                <DockItem $w={40} $h={32} $mt={22} $run><TerminalIcon /></DockItem>
                <DockSep />
                <DockItem $w={32} $h={40} $mt={17}><TrashBox><Recycle size={18} strokeWidth={2.6} /></TrashBox></DockItem>
                <AppsGrid>{Array.from({ length: 9 }, (_, i) => <AppsDot key={i} />)}</AppsGrid>
              </Dock>
              <Browser>
                <TabBar>
                  <FxView><FirefoxIcon s={16} id="fxt" /></FxView>
                  <Tab $w={204} $pad={10}>
                    <JupyterArcs s={16} />
                    <TabText>Documents/</TabText>
                    <X size={12} />
                  </Tab>
                  <Tab $w={203} $pad={8}>
                    <BookOpen size={14} color="#f37726" fill="#f37726" />
                    <TabText $fade>ProjectTwoDashboard - JupyterLab</TabText>
                    <X size={12} />
                  </Tab>
                  <Tab $w={199} $pad={7} $active>
                    <DashIcon />
                    <TabText>Dash</TabText>
                    <X size={12} />
                  </Tab>
                  <NewTab><Plus size={15} strokeWidth={1.4} /></NewTab>
                  <TabEnd>
                    <ListTabs><ChevronDown size={16} strokeWidth={1.4} /></ListTabs>
                    <WinBtn><Minus size={10} /></WinBtn>
                    <WinBtn>
                      <svg width="10" height="10" viewBox="0 0 10 10" fill="none" stroke="#444" strokeWidth="1"><rect x="1" y="2.5" width="6.5" height="6.5" /><path d="M3 2.5V1h6v6H7.5" /></svg>
                    </WinBtn>
                    <WinBtn><X size={11} /></WinBtn>
                  </TabEnd>
                </TabBar>
                <ToolBar>
                  <NavBtn $dim><ArrowLeft size={16} strokeWidth={1.5} /></NavBtn>
                  <NavBtn $dim><ArrowRight size={16} strokeWidth={1.5} /></NavBtn>
                  <NavBtn><RotateCw size={15} strokeWidth={1.6} /></NavBtn>
                  <UrlBar>
                    <UrlIcon $gap={9}><Shield size={15} strokeWidth={1.5} /></UrlIcon>
                    <UrlIcon $gap={11}><File size={14} strokeWidth={1.6} /></UrlIcon>
                    <UrlHost>127.0.0.1</UrlHost>
                    <UrlPort>:17623</UrlPort>
                    <Star size={15} strokeWidth={1.4} />
                  </UrlBar>
                  <ToolIcons>
                    <PocketIcon />
                    <Puzzle size={16} strokeWidth={1.4} />
                    <Menu size={16} strokeWidth={1.5} />
                  </ToolIcons>
                </ToolBar>
                <Page>
                  <LogoRow><LogoArt /></LogoRow>
                  <Title>CS-340 Dashboard - Chrysanthemum</Title>
                  <Rule $mt={17} />
                  <SelectLabel>Select Rescue Type:</SelectLabel>
                  <SelectWrap>
                    <SelectBox>
                      <Caret />
                      <SelectText>Reset Filters</SelectText>
                      <ClearX><X size={14} strokeWidth={1.6} /></ClearX>
                      <UpArrow />
                    </SelectBox>
                    <SelectMenu>
                      <Option>Water Rescue</Option>
                      <Option>Mountain or Wilderness Rescue</Option>
                      <Option>Disaster or Individual Tracking</Option>
                      <Option $active>Reset Filters</Option>
                    </SelectMenu>
                  </SelectWrap>
                  <Table>
                    <TailRow text="age_upon_outcome_in_weeks" />
                    <TailRow text="" tint />
                    <TailRow text="7" />
                    <TailRow text="3" />
                    {rows.map(r => (
                      <Row key={r[2]}>
                        <RadioCell><Radio $on={r[2] === "A691584"} /></RadioCell>
                        {r.map((c, i) => <Cell key={i}>{c}</Cell>)}
                      </Row>
                    ))}
                  </Table>
                  <Pager>
                    <PageBtn $w={19} $ml={0} $dim><ChevronsLeft size={12} strokeWidth={3} /></PageBtn>
                    <PageBtn $w={16} $ml={8} $dim><ChevronLeft size={12} strokeWidth={3} /></PageBtn>
                    <PageInput>1</PageInput>
                    <PageSlash>/</PageSlash>
                    <PageTotal>1001</PageTotal>
                    <PageBtn $w={14} $ml={0}><ChevronRight size={12} strokeWidth={3} /></PageBtn>
                    <PageBtn $w={20} $ml={9}><ChevronsRight size={12} strokeWidth={3} /></PageBtn>
                  </Pager>
                  <Rule $mt={29} />
                  <Lower>
                    <Chart />
                    <MapView />
                  </Lower>
                  <Fab>
                    <svg width="40" height="24" viewBox="0 0 40 24" fill="none" stroke="#fff" strokeWidth="3.2"><path d="M13 3L3 12l10 9M27 3l10 9-10 9" /></svg>
                    <FabBadge><RedDot />1</FabBadge>
                  </Fab>
                </Page>
              </Browser>
            </Main>
          </Screen>
        </Frame>
      </Desk>
    </>
  );
}
